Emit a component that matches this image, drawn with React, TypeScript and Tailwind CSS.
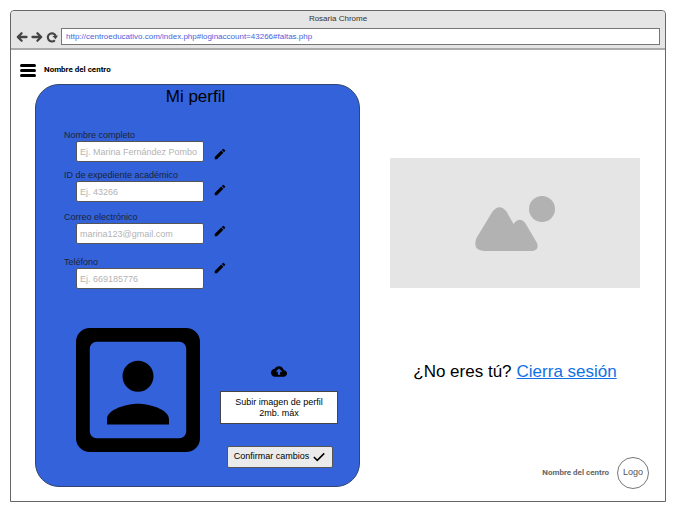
import React from "react";
import { MdEdit } from "react-icons/md";

type Field = { id: string; label: string; type: string; placeholder: string; gap: string; iconGap: string };

const fields: Field[] = [
  { id: "nombre", label: "Nombre completo", type: "text", placeholder: "Ej. Marina Fernández Pombo", gap: "", iconGap: "" },
  { id: "expediente", label: "ID de expediente académico", type: "text", placeholder: "Ej. 43266", gap: "mt-[7px]", iconGap: "mt-[22px]" },
  { id: "correo", label: "Correo electrónico", type: "email", placeholder: "marina123@gmail.com", gap: "mt-[9px]", iconGap: "mt-[27px]" },
  { id: "telefono", label: "Teléfono", type: "tel", placeholder: "Ej. 669185776", gap: "mt-3", iconGap: "mt-[23px]" },
];

function ArrowIcon({ className = "" }: { className?: string }) {
  return (
    <svg viewBox="0 0 12 12" className={`size-3 ${className}`} fill="none" stroke="#444" strokeWidth="2.3" strokeLinecap="round" strokeLinejoin="round" aria-hidden="true">
      <path d="M10.5 6H2.4M5.6 2.2 1.8 6 5.6 9.8" />
    </svg>
  );
}

function ReloadIcon() {
  return (
    <svg viewBox="0 0 12 12" className="size-3" aria-hidden="true">
      <path d="M8.8 9.3A4.1 4.1 0 1 1 9.7 4.9" fill="none" stroke="#444" strokeWidth="2.2" />
      <path d="M12 4.6 9.6 8.2 6.4 4.9z" fill="#444" />
    </svg>
  );
}

function CheckIcon() {
  return (
    <svg viewBox="0 0 24 24" className="size-[14px]" fill="none" stroke="currentColor" strokeWidth="2.6" aria-hidden="true">
      <path d="M3.2 12 9 17.8 21 5.800" />
    </svg>
  );
}

function PortraitIcon() {
  return (
    <svg viewBox="3 3 18 18" className="size-[124px]" role="img" aria-label="Imagen de perfil">
      <path
        fillRule="evenodd"
        d="M5 3h14a2 2 0 0 1 2 2v14a2 2 0 0 1-2 2H5a2 2 0 0 1-2-2V5a2 2 0 0 1 2-2zm1 2a1 1 0 0 0-1 1v12a1 1 0 0 0 1 1h12a1 1 0 0 0 1-1V6a1 1 0 0 0-1-1z"
      />
      <path d="M12 12.25a2.25 2.25 0 1 0 0-4.5 2.25 2.25 0 0 0 0 4.5zm4.5 4c0-1.5-3-2.25-4.5-2.25s-4.5.75-4.5 2.25V17h9z" />
    </svg>
  );
}

function CloudIcon() {
  return (
    <svg viewBox="0 4 24 16" className="h-[11px] w-4" aria-hidden="true">
      <path
        fillRule="evenodd"
        d="M19.35 10.04C18.67 6.59 15.64 4 12 4 9.11 4 6.6 5.64 5.35 8.04 2.34 8.36 0 10.91 0 14c0 3.31 2.69 6 6 6h13c2.76 0 5-2.24 5-5 0-2.64-2.05-4.78-4.65-4.96zM13.7 12.5V17h-3.4v-4.5H7l5-5 5 5z"
      />
    </svg>
  );
}

function BrowserBar() {
  return (
    <header className="rounded-t border-b-2 border-[#aaa] bg-[#e5e5e5] px-[5px] pb-[3px]">
      <p className="h-[17px] text-center text-[8px] leading-4 text-[#333]">Rosaria Chrome</p>
      <div className="flex items-center gap-[3px]">
        <button type="button" aria-label="Atrás"><ArrowIcon /></button>
        <button type="button" aria-label="Adelante"><ArrowIcon className="rotate-180" /></button>
        <button type="button" aria-label="Recargar"><ReloadIcon /></button>
        <input
          aria-label="Dirección"
          defaultValue="http://centroeducativo.com/index.php#loginaccount=43266#faltas.php"
          className="h-[17px] min-w-0 flex-1 border border-[#777] bg-white px-1 text-[8px] text-[#4a5fe0] outline-none"
        />
      </div>
    </header>
  );
}

function ProfileCard() {
  return (
    <form className="self-start rounded-3xl border border-[#31456f] bg-[#3362da] pb-[18px]" onSubmit={(e) => e.preventDefault()}>
      <h1 className="pr-1 text-center text-[17px] leading-6">Mi perfil</h1>
      <div className="mt-5 flex gap-[9px] pl-7">
        <div className="flex flex-col">
          {fields.map((f) => (
            <div key={f.id} className={`flex flex-col ${f.gap}`}>
              <label htmlFor={f.id} className="text-[9px] leading-3 text-[#1c2438]">{f.label}</label>
              <input
                id={f.id}
                type={f.type}
                placeholder={f.placeholder}
                className="ml-3 h-[21px] w-32 rounded-xs border border-[#555] bg-white px-[3px] text-[9px] outline-none placeholder:text-[#b3b3b3]"
              />
            </div>
          ))}
        </div>
        <div className="flex flex-col pt-[18px]">
          {fields.map((f) => (
            <button key={f.id} type="button" aria-label={`Editar ${f.label}`} className={f.iconGap}>
              <MdEdit className="size-[14px]" />
            </button>
          ))}
        </div>
      </div>
      <div className="mt-[39px] flex items-start gap-5 pl-10">
        <PortraitIcon />
        <div className="flex flex-col items-center pt-[38px]">
          <CloudIcon />
          <button type="button" className="mt-[14px] h-[33px] w-[118px] border border-[#444] bg-white text-[9px] leading-[11px]">
            Subir imagen de perfil
            <br />
            2mb. máx
          </button>
          <button type="submit" className="mt-[22px] mr-[5px] flex h-[22px] w-[106px] items-center justify-center gap-[3px] self-end rounded-xs border border-[#555] bg-[#ebebeb] text-[9px]">
            Confirmar cambios
            <CheckIcon />
          </button>
        </div>
      </div>
    </form>
  );
}

function SidePanel() {
  return (
    <div className="flex flex-col pt-[74px]">
      <div className="mr-[9px] flex h-[130px] items-center justify-center bg-[#e5e5e5]">
        <svg viewBox="0 0 80 55" className="h-[55px] w-20" fill="#b2b2b2" role="img" aria-label="Imagen">
          <path d="M1.5 42 17.5 15.5Q24.5 7 31.5 15.5L38.5 28Q45 20 50.5 27.5L62 47Q64.5 54 57 55H9Q-3 54 1.5 42z" />
          <circle cx="67" cy="13" r="13" />
        </svg>
      </div>
      <p className="mt-[72px] mr-[9px] flex justify-center gap-[5px] text-[17px] leading-6">
        <span>¿No eres tú?</span>
        <a href="#salir" className="text-[#1071e5] underline">Cierra sesión</a>
      </p>
      <footer className="mt-[73px] flex items-center justify-end gap-2">
        <span className="font-[Roboto,Arial,sans-serif] text-[8px] font-bold text-[#666]">Nombre del centro</span>
        <span className="flex size-8 items-center justify-center rounded-full border border-[#777] text-[9px] text-[#555]">Logo</span>
      </footer>
    </div>
  );
}

export default function App() {
  return (
    <div className="bg-white p-[10px] pr-[18px] font-['Liberation_Sans',Arial,sans-serif] text-black">
      <div className="rounded-t border border-[#666]">
        <BrowserBar />
        <main className="pt-3 pr-4 pb-3 pl-6">
          <div className="-ml-[15px] flex h-4 items-center gap-2">
            <button type="button" aria-label="Menú" className="flex flex-col gap-[2px]">
              <span className="h-[3px] w-4 rounded-full bg-black" />
              <span className="h-[3px] w-4 rounded-full bg-black" />
              <span className="h-[3px] w-4 rounded-full bg-black" />
            </button>
            <span className="font-[Roboto,Arial,sans-serif] text-[8px] font-bold">Nombre del centro</span>
          </div>
          <div className="mt-[6px] grid grid-cols-[325fr_259fr] gap-[30px]">
            <ProfileCard />
            <SidePanel />
          </div>
        </main>
      </div>
    </div>
  );
}
